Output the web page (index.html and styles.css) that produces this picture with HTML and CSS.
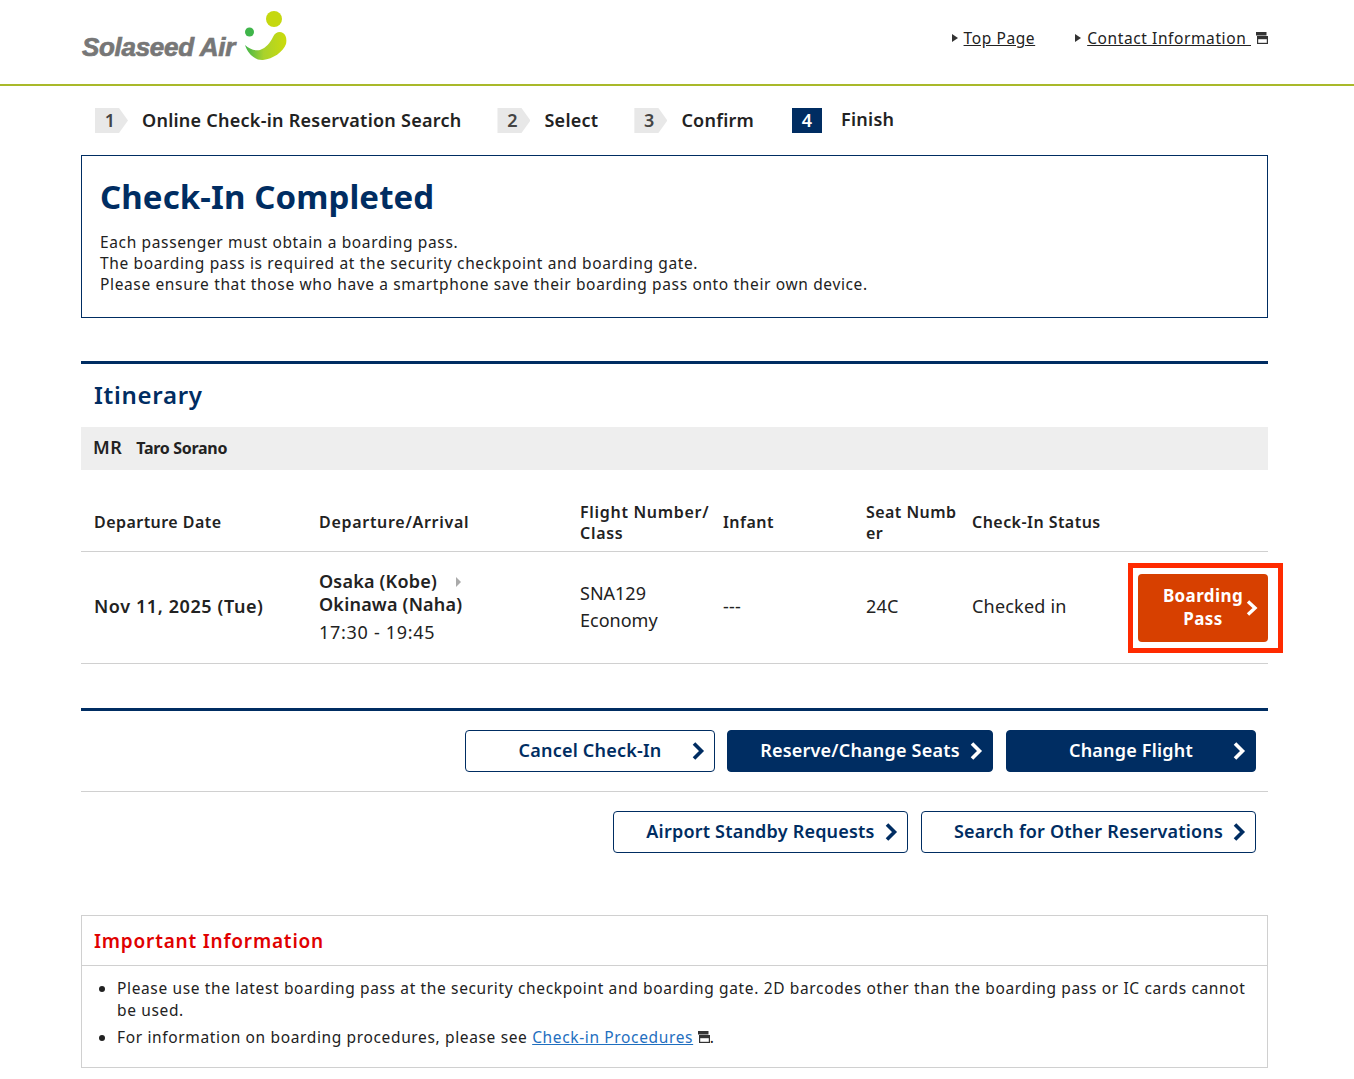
FILE: index.html
```html
<!DOCTYPE html>
<html lang="en">
<head>
<meta charset="utf-8">
<title>Check-In Completed</title>
<link rel="stylesheet" href="styles.css">
</head>
<body>
<header class="site-header">
  <div class="wrap header-inner">
    <div class="logo">
      <span class="logo-text">Solaseed Air</span>
      <svg class="logo-mark" width="43" height="52" viewBox="0 0 43 52">
        <defs><linearGradient id="g" x1="0" y1="0" x2="1" y2="0"><stop offset="0" stop-color="#3fb54a"/><stop offset=".45" stop-color="#a9d22c"/><stop offset="1" stop-color="#cbdb0c"/></linearGradient></defs>
        <circle cx="29" cy="8" r="8" fill="#c5d80f"/>
        <circle cx="4.500" cy="21" r="4.500" fill="#3fb54a"/>
        <path d="M0 34C4 38 10 40 15 39 21 37 25 32 28 26 30 21 35 20 38 22 41 24 42 28 41 33 38 41 28 48 18 49 10 49.500 3 43 0 34Z" fill="url(#g)"/>
      </svg>
    </div>
    <nav class="top-nav">
      <a class="nav-link" href="#"><span class="tri"></span><u>Top Page</u></a>
      <a class="nav-link" href="#"><span class="tri"></span><u>Contact Information&nbsp;</u>
        <svg class="win" width="12" height="12" viewBox="0 0 12 12"><rect x="0" y="0" width="10.500" height="3.500" fill="#333"/><rect x="1.600" y="4.600" width="9.800" height="6.800" fill="#fff" stroke="#333" stroke-width="1.200"/><rect x="1.600" y="4.600" width="9.800" height="2.600" fill="#333"/></svg>
      </a>
    </nav>
  </div>
</header>

<main class="wrap">
  <ol class="steps">
    <li class="step"><span class="num">1</span><span class="label">Online Check-in Reservation Search</span></li>
    <li class="step"><span class="num">2</span><span class="label">Select</span></li>
    <li class="step"><span class="num">3</span><span class="label">Confirm</span></li>
    <li class="step current"><span class="num">4</span><span class="label">Finish</span></li>
  </ol>

  <section class="complete">
    <h1>Check-In Completed</h1>
    <p>Each passenger must obtain a boarding pass.<br>The boarding pass is required at the security checkpoint and boarding gate.<br>Please ensure that those who have a smartphone save their boarding pass onto their own device.</p>
  </section>

  <section class="itinerary">
    <h2>Itinerary</h2>
    <div class="passenger"><span class="title">MR</span><span class="name">Taro Sorano</span></div>
    <div class="table">
      <div class="row head">
        <div class="c1">Departure Date</div>
        <div class="c2 wide">Departure/Arrival</div>
        <div class="c3 two wide">Flight Number/<br>Class</div>
        <div class="c4">Infant</div>
        <div class="c5 two">Seat Numb<br>er</div>
        <div class="c6">Check-In Status</div>
        <div class="c7"></div>
      </div>
      <div class="row body">
        <div class="c1 strong up2">Nov 11, 2025 (Tue)</div>
        <div class="c2 route-cell">
          <div class="route strong">Osaka (Kobe)<span class="tri grey"></span><br>Okinawa (Naha)</div>
          <div class="time">17:30 - 19:45</div>
        </div>
        <div class="c3 flight up1">SNA129<br>Economy</div>
        <div class="c4 up2">---</div>
        <div class="c5 up2">24C</div>
        <div class="c6 up2">Checked in</div>
        <div class="c7">
          <div class="highlight">
            <a class="board" href="#"><span>Boarding<br>Pass</span>
              <svg class="chev" width="12" height="18" viewBox="0 0 12 18"><path d="M2 2.500 9 9l-7 6.500" fill="none" stroke="#fff" stroke-width="3.400"/></svg>
            </a>
          </div>
        </div>
      </div>
    </div>
  </section>

  <section class="actions">
    <div class="btn-row first">
      <a class="btn outline shift" href="#"><span>Cancel Check-In</span><svg class="chev" width="14" height="20" viewBox="0 0 14 20"><path d="M3 2.500 10.500 10 3 17.500" fill="none" stroke="#002d62" stroke-width="3.600"/></svg></a>
      <a class="btn solid w266" href="#"><span>Reserve/Change Seats</span><svg class="chev" width="14" height="20" viewBox="0 0 14 20"><path d="M3 2.500 10.500 10 3 17.500" fill="none" stroke="#fff" stroke-width="3.600"/></svg></a>
      <a class="btn solid w250" href="#"><span>Change Flight</span><svg class="chev" width="14" height="20" viewBox="0 0 14 20"><path d="M3 2.500 10.500 10 3 17.500" fill="none" stroke="#fff" stroke-width="3.600"/></svg></a>
    </div>
    <div class="btn-row second">
      <a class="btn outline w295" href="#"><span>Airport Standby Requests</span><svg class="chev" width="14" height="20" viewBox="0 0 14 20"><path d="M3 2.500 10.500 10 3 17.500" fill="none" stroke="#002d62" stroke-width="3.600"/></svg></a>
      <a class="btn outline w335" href="#"><span>Search for Other Reservations</span><svg class="chev" width="14" height="20" viewBox="0 0 14 20"><path d="M3 2.500 10.500 10 3 17.500" fill="none" stroke="#002d62" stroke-width="3.600"/></svg></a>
    </div>
  </section>

  <section class="info">
    <h3>Important Information</h3>
    <ul>
      <li>Please use the latest boarding pass at the security checkpoint and boarding gate. 2D barcodes other than the boarding pass or IC cards cannot be used.</li>
      <li>For information on boarding procedures, please see <a href="#">Check-in Procedures</a> <svg class="win" width="12" height="12" viewBox="0 0 12 12"><rect x="0" y="0" width="10.500" height="3.500" fill="#333"/><rect x="1.600" y="4.600" width="9.800" height="6.800" fill="#fff" stroke="#333" stroke-width="1.200"/><rect x="1.600" y="4.600" width="9.800" height="2.600" fill="#333"/></svg>.</li>
    </ul>
  </section>
</main>
</body>
</html>
```

FILE: styles.css
```css
* { box-sizing: border-box; }
html, body { margin: 0; padding: 0; }
body {
  background: #fff;
  color: #222;
  font-family: "Noto Sans", "Liberation Sans", sans-serif;
  font-size: 15.5px;
  letter-spacing: 0.64px;
}
a { color: inherit; }
.wrap { width: 1187px; margin-left: 81px; }
.site-header { height: 86px; border-bottom: 2px solid #a9b92a; }
.header-inner { display: flex; justify-content: space-between; height: 84px; }
.logo { display: flex; align-items: flex-start; padding: 11px 0 0 1px; }
.logo-text {
  margin-top: 18px;
  width: 154px;
  white-space: nowrap;
  font-family: "Liberation Sans", sans-serif;
  font-weight: 700;
  font-style: italic;
  font-size: 26px;
  letter-spacing: -0.3px;
  -webkit-text-stroke: 0.7px #777;
  color: #777;
  line-height: 36px;
}
.logo-mark { margin-left: 9px; }
.top-nav { display: flex; align-items: center; gap: 40px; height: 76px; letter-spacing: 0.6px; }
.nav-link { display: flex; align-items: center; text-decoration: none; color: #222; }
.nav-link .win { margin-left: 5px; }
.tri {
  display: inline-block;
  width: 0;
  height: 0;
  border-left: 6px solid #333;
  border-top: 4px solid transparent;
  border-bottom: 4px solid transparent;
  margin-right: 6px;
}
.tri.grey { border-left: 5px solid #aaa; border-top-width: 5px; border-bottom-width: 5px; margin: 0 0 1px 19px; }
.steps { display: flex; list-style: none; margin: 0; padding: 22px 0 0 14px; gap: 36px; height: 69px; }
.step { display: flex; align-items: flex-start; font-weight: 600; font-size: 18px; color: #222; letter-spacing: 0.25px; }
.step.current { margin-left: 2px; }
.num {
  width: 33px;
  height: 25px;
  background: #e8e8e8;
  clip-path: polygon(0 0, 24px 0, 33px 50%, 24px 100%, 0 100%);
  color: #444;
  text-align: center;
  padding-right: 3px;
  line-height: 25px;
  font-size: 18px;
}
.label { margin-left: 14px; line-height: 25px; }
.current .num { width: 30px; background: #002d62; color: #fff; clip-path: none; padding: 0; }
.current .label { margin-left: 19px; line-height: 24px; margin-top: -1px; }
.complete { border: 1px solid #002d62; height: 163px; padding: 19px 18px 0; }
.complete h1 { margin: 0 0 13px; font-size: 33px; line-height: 44px; font-weight: 700; color: #002d62; letter-spacing: 0.1px; }
.complete p { margin: 0; line-height: 21px; }
.itinerary { margin-top: 43px; border-top: 3px solid #002d62; }
.itinerary h2 { margin: 0; padding: 13px 13px 0; height: 63px; font-size: 24px; line-height: 36px; font-weight: 600; color: #002d62; letter-spacing: 0.7px; }
.passenger { background: #eee; height: 43px; padding: 0 0 2px 12px; display: flex; align-items: center; font-weight: 600; }
.title { font-size: 18px; letter-spacing: 0.5px; padding-bottom: 2px; }
.name { margin-left: 14px; font-size: 16px; letter-spacing: -0.3px; font-weight: 700; }
.table { margin-top: 23px; }
.row { display: grid; grid-template-columns: 225px 261px 143px 143px 106px 156px 140px; align-items: center; border-bottom: 1px solid #d0d0d0; padding-left: 13px; }
.row.head { height: 59px; line-height: 21px; font-weight: 600; font-size: 16px; letter-spacing: 0.45px; }
.row.head .wide { letter-spacing: 0.7px; }
.two { padding-top: 2px; }
.row.body { height: 112px; font-size: 18px; letter-spacing: 0.2px; }
.strong { font-weight: 600; }
.c1.strong { letter-spacing: 0.6px; }
.up1 { margin-bottom: 2px; }
.up2 { margin-bottom: 4px; }
.route-cell { margin-bottom: 1px; }
.route { line-height: 23px; }
.time { margin-top: 4px; line-height: 25px; letter-spacing: 0.7px; font-weight: 400; }
.flight { line-height: 27px; letter-spacing: 0; }
.c7 { display: flex; justify-content: flex-end; }
.highlight { border: 5px solid #ff2a00; padding: 6px 10px 6px 5px; margin-right: -15px; flex: none; }
.board { display: flex; align-items: center; justify-content: center; width: 130px; height: 68px; padding-bottom: 2px; background: #d74000; border-radius: 4px; color: #fff; text-decoration: none; font-weight: 700; text-align: center; font-size: 17px; line-height: 23px; letter-spacing: 0.4px; position: relative; }
.board .chev { position: absolute; right: 10px; top: 25px; }
.actions { margin-top: 44px; border-top: 3px solid #002d62; }
.btn-row { display: flex; justify-content: flex-end; gap: 13px; padding-right: 12px; }
.btn-row.first { padding-top: 19px; padding-bottom: 19px; border-bottom: 1px solid #d0d0d0; }
.btn-row.second { padding-top: 19px; }
.btn { display: flex; align-items: center; justify-content: center; height: 42px; padding-bottom: 2px; border-radius: 4px; font-size: 18px; font-weight: 600; text-decoration: none; border: 1px solid #002d62; position: relative; letter-spacing: 0.2px; }
.btn .chev { position: absolute; right: 9px; top: 10px; }
.outline { background: #fff; color: #002d62; }
.solid { background: #002d62; color: #fff; }
.shift { width: 250px; margin-right: -1px; }
.w250 { width: 250px; }
.w266 { width: 266px; }
.w295 { width: 295px; }
.w335 { width: 335px; }
.info { margin-top: 62px; border: 1px solid #d0d0d0; height: 153px; }
.info h3 { margin: 0; height: 50px; padding: 0 12px; line-height: 50px; font-size: 19px; font-weight: 600; color: #e00000; border-bottom: 1px solid #d0d0d0; letter-spacing: 0.8px; }
.info ul { margin: 0; padding: 11px 12px 0 35px; line-height: 22px; }
.info li { margin-bottom: 5px; }
.info li a { color: #1f6fbf; }
```
